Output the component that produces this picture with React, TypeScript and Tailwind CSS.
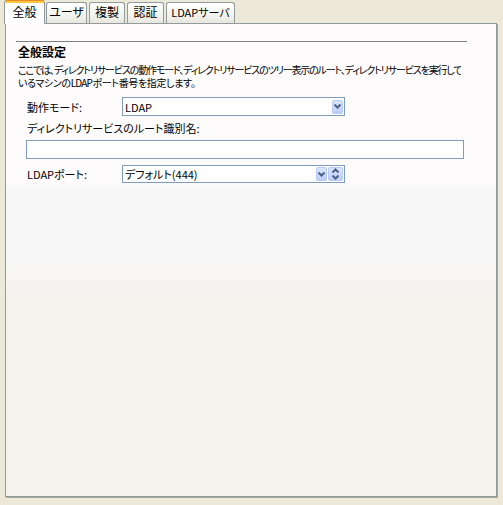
import React from "react"

const jp = { fontFamily: '"Noto Sans CJK JP", "Liberation Sans", sans-serif', fontFeatureSettings: '"palt"' }

function Tab({ label, active, w }: { label: string; active?: boolean; w: string }) {
  if (active) {
    return (
      <div className={`relative z-10 -mb-px flex h-[24px] flex-col rounded-t-[3px] border-x border-[#919b9c] bg-white ${w}`}>
        <div className="h-[1px] rounded-t-[3px] bg-[#e68b2c]" />
        <div className="h-[2px] bg-[#ffc73c]" />
        <div className="flex flex-1 items-start justify-center pt-[1px] text-[12px] leading-[16px] text-black">{label}</div>
      </div>
    )
  }
  return (
    <div
      className={`flex h-[21px] items-start justify-center rounded-t-[3px] border-x border-t border-[#919b9c] bg-[linear-gradient(to_bottom,#ffffff,#f3f3ef_60%,#e8e6dd)] pt-[1px] leading-[16px] text-black ${w}`}
    >
      {label}
    </div>
  )
}

function ArrowDown() {
  return (
    <svg width="7" height="5" viewBox="0 0 7 5" className="block">
      <path d="M0.5 0.5 L3.5 3.5 L6.5 0.5" stroke="#4d6185" strokeWidth="2" fill="none" />
    </svg>
  )
}

function ArrowUp() {
  return (
    <svg width="7" height="5" viewBox="0 0 7 5" className="block">
      <path d="M0.5 4.5 L3.5 1.5 L6.5 4.5" stroke="#4d6185" strokeWidth="2" fill="none" />
    </svg>
  )
}

function DropBtn({ children, wide }: { children: React.ReactNode; wide?: boolean }) {
  return (
    <div
      className={`flex h-[14px] flex-col items-center justify-center gap-[2px] rounded-[2px] border border-[#b8cbf4] bg-[linear-gradient(to_bottom,#dbe5fd,#bccefa)] ${wide ? "w-[15px]" : "w-[11px]"}`}
    >
      {children}
    </div>
  )
}

export default function App() {
  return (
    <div className="h-[505px] w-[503px] overflow-hidden bg-[#ece9d8] text-black" style={jp}>
      {/* tabs */}
      <div className="flex h-[23px] items-end gap-[2px] pl-[4px]">
        <Tab label="全般" active w="w-[41px]" />
        <Tab label="ユーザ" w="w-[41px] -ml-[1px] text-[12px]" />
        <Tab label="複製" w="w-[36px] text-[12px]" />
        <Tab label="認証" w="w-[37px] text-[12px]" />
        <Tab label="LDAPサーバ" w="w-[69px] text-[11px]" />
      </div>

      {/* panel */}
      <div className="ml-[5px] h-[474px] w-[492px] border-t border-l border-[#919b9c] shadow-[1px_1px_0_#aca899]">
        <div className="h-full border-r border-b border-[#919b9c] bg-[linear-gradient(to_bottom,#fefbfd_33%,#f7f7f7_36%,#f7f7f7_50%,#f5f3ee_58%)] pl-[10px] pr-[20px] pt-[17px]">
          <div className="mr-[9px] h-px bg-[#808080]" />
          <div className="mt-[3px] pl-[2px] text-[12px] font-bold leading-[14px]">全般設定</div>
          <div className="mt-[4px] pl-[2px] text-[10px] leading-[13px]">
            <div className="w-[443px] overflow-hidden tracking-[-1.6px] [text-align-last:justify]">
              ここでは、ディレクトリサービスの動作モード、ディレクトリサービスのツリー表示のルート、ディレクトリサービスを実行して
            </div>
            <div className="w-[177px] tracking-[-0.8px] [text-align-last:justify]">いるマシンのLDAPポート番号を指定します。</div>
          </div>

          <div className="mt-[8px] flex items-center pl-[11px]">
            <div className="w-[95px] text-[11px] leading-[14px]">動作モード:</div>
            <div className="flex h-[19px] w-[223px] items-center justify-between border border-[#7f9db9] bg-white pl-[2px] pr-[1px]">
              <span className="text-[11px] leading-[14px]">LDAP</span>
              <DropBtn>
                <ArrowDown />
              </DropBtn>
            </div>
          </div>

          <div className="mt-[5px] pl-[11px] text-[11px] leading-[14px]">ディレクトリサービスのルート識別名:</div>
          <div className="mt-[5px] ml-[10px] h-[19px] w-[438px] border border-[#7f9db9] bg-white" />

          <div className="mt-[6px] flex items-center pl-[11px]">
            <div className="w-[95px] text-[11px] leading-[14px]">LDAPポート:</div>
            <div className="flex h-[18px] w-[223px] items-center justify-between border border-[#7f9db9] bg-white pl-[2px] pr-[1px]">
              <span className="text-[11px] leading-[14px]">デフォルト(444)</span>
              <div className="flex items-center gap-[1px]">
                <DropBtn>
                  <ArrowDown />
                </DropBtn>
                <DropBtn wide>
                  <ArrowUp />
                  <ArrowDown />
                </DropBtn>
              </div>
            </div>
          </div>
        </div>
      </div>
    </div>
  )
}
